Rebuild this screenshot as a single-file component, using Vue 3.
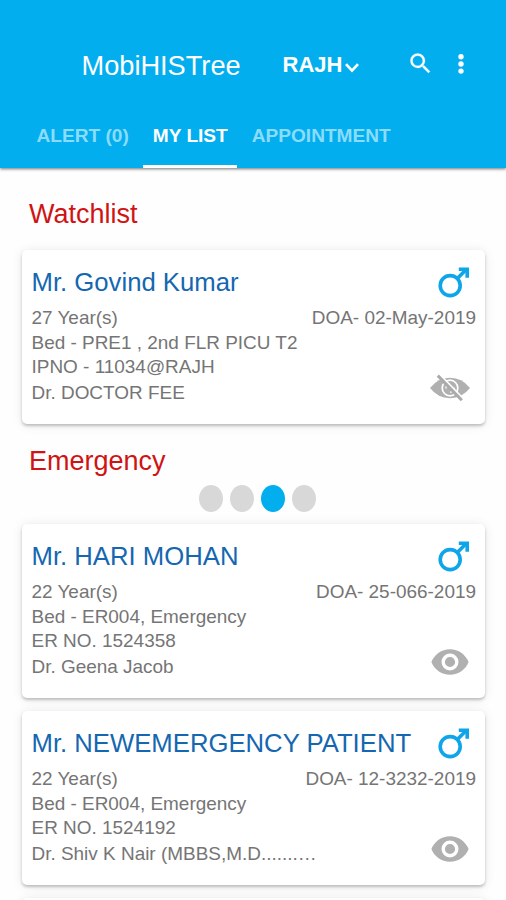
<script setup>
const tabs = [
  { label: 'ALERT (0)', active: false },
  { label: 'MY LIST', active: true },
  { label: 'APPOINTMENT', active: false },
]

const sections = [
  {
    title: 'Watchlist',
    dots: 0,
    patients: [
      {
        name: 'Mr. Govind Kumar',
        age: '27 Year(s)',
        doa: 'DOA- 02-May-2019',
        lines: ['Bed - PRE1 , 2nd FLR PICU T2', 'IPNO - 11034@RAJH', 'Dr. DOCTOR FEE'],
        watched: true,
      },
    ],
  },
  {
    title: 'Emergency',
    dots: 4,
    patients: [
      {
        name: 'Mr. HARI MOHAN',
        age: '22 Year(s)',
        doa: 'DOA- 25-066-2019',
        lines: ['Bed - ER004, Emergency', 'ER NO. 1524358', 'Dr. Geena Jacob'],
        watched: false,
      },
      {
        name: 'Mr. NEWEMERGENCY PATIENT',
        age: '22 Year(s)',
        doa: 'DOA- 12-3232-2019',
        lines: ['Bed - ER004, Emergency', 'ER NO. 1524192', 'Dr. Shiv K Nair (MBBS,M.D.......…'],
        watched: false,
      },
    ],
  },
]
</script>

<template>
  <div class="screen">
    <header class="appbar">
      <div class="toolbar">
        <h1 class="title">MobiHISTree</h1>
        <div class="site">
          <span>RAJH</span>
          <svg class="chevron" viewBox="0 0 16 12"><path d="M2 2.2 8 8.6 14 2.2" fill="none" stroke="#fff" stroke-width="2.7" /></svg>
        </div>
        <svg class="search" viewBox="0 0 24 24"><path fill="#fff" stroke="#fff" stroke-width="0.2" d="M15.5 14h-.79l-.28-.27A6.47 6.47 0 0 0 16 9.5 6.5 6.5 0 1 0 9.5 16c1.61 0 3.09-.59 4.23-1.57l.27.28v.79l5 4.99L20.49 19l-4.99-5zm-6 0C7.01 14 5 11.99 5 9.5S7.01 5 9.5 5 14 7.01 14 9.5 11.99 14 9.5 14z" /></svg>
        <svg class="more" viewBox="0 0 6 20"><g fill="#fff"><circle cx="3" cy="2.8" r="2.7" /><circle cx="3" cy="10" r="2.7" /><circle cx="3" cy="17.1" r="2.7" /></g></svg>
      </div>
      <nav class="tabs">
        <span v-for="t in tabs" :key="t.label" class="tab" :class="{ active: t.active }">{{ t.label }}</span>
      </nav>
    </header>

    <main class="content">
      <section v-for="s in sections" :key="s.title" class="section">
        <h2 class="heading">{{ s.title }}</h2>
        <div v-if="s.dots" class="dots">
          <i v-for="n in s.dots" :key="n" class="dot" :class="{ on: n === 3 }"></i>
        </div>
        <article v-for="p in s.patients" :key="p.name" class="card">
          <div class="head">
            <h3 class="name">{{ p.name }}</h3>
            <svg class="gender" viewBox="0 0 32 31">
              <g fill="none" stroke="#0fa5e9" stroke-width="3.6">
                <circle cx="12.2" cy="18.6" r="10" />
                <path d="M19.3 11.5 28.5 2.3" />
                <path d="M20.8 2.3H29.2V10.7" />
              </g>
            </svg>
          </div>
          <div class="row">
            <span>{{ p.age }}</span>
            <span>{{ p.doa }}</span>
          </div>
          <div class="bottom">
            <div class="lines">
              <p v-for="l in p.lines" :key="l">{{ l }}</p>
            </div>
            <svg v-if="p.watched" class="eye" viewBox="0 0 40 28">
              <path d="M0 14Q8 3.8 20 3.8T40 14Q32 24.2 20 24.2T0 14Z" fill="#b0b0b0" />
              <circle cx="20" cy="14" r="7.8" fill="none" stroke="#fff" stroke-width="1.7" />
              <path d="M16 14.5a4.2 4.2 0 0 1 4-4.7M24 13.5a4.2 4.2 0 0 1-4 4.7" fill="none" stroke="#fff" stroke-width="1.3" />
              <path d="M9.8 0.6 33.8 25.2" stroke="#fff" stroke-width="1.8" />
              <path d="M7.8 1.6 31.8 26.2" stroke="#aaa" stroke-width="3" />
            </svg>
            <svg v-else class="eye" viewBox="0 0 40 28">
              <path fill-rule="evenodd" fill="#b0b0b0" d="M20 1.2C11.5 1.2 4.3 6.5 1.4 14 4.3 21.5 11.5 26.8 20 26.8S35.7 21.5 38.6 14C35.7 6.5 28.5 1.2 20 1.2ZM20 22.5A8.5 8.5 0 1 1 20 5.5 8.5 8.5 0 0 1 20 22.5ZM20 8.9A5.1 5.1 0 1 0 20 19.1 5.1 5.1 0 0 0 20 8.9Z" />
            </svg>
          </div>
        </article>
      </section>
      <div class="card next"></div>
    </main>
  </div>
</template>

<style>
body {
  margin: 0;
  background: #fefefe;
  overflow: hidden;
}
</style>

<style scoped>
.screen {
  height: 900px;
  overflow: hidden;
  font-family: "Liberation Sans", Arial, sans-serif;
}
h1, h2, h3, p { margin: 0; font-weight: 400; }
svg { display: block; flex: none; }
.appbar {
  position: relative;
  box-sizing: border-box;
  height: 168px;
  padding-top: 46px;
  background: #03aeef;
  color: #fff;
  box-shadow: 0 1px 3px rgba(0, 0, 0, 0.55);
}
.toolbar {
  display: flex;
  align-items: center;
  height: 38px;
  padding-left: 81.5px;
}
.title {
  width: 201px;
  font-size: 27.2px;
  line-height: 38px;
  padding-top: 1px;
}
.site {
  display: flex;
  align-items: center;
  width: 124px;
  font-size: 22px;
  line-height: 38px;
  font-weight: 700;
}
.chevron { width: 16px; height: 12px; margin: 5px 0 0 2px; }
.search { width: 27px; height: 27px; margin: -3px 25px 0 0; }
.more { width: 6px; height: 20px; margin-top: -3px; margin-left: -1px; }
.tabs {
  display: flex;
  height: 84px;
  padding-left: 27px;
}
.tab {
  box-sizing: border-box;
  height: 84px;
  padding: 42px 9.5px 0;
  margin-right: 5px;
  font-size: 19.1px;
  line-height: 20px;
  font-weight: 700;
  color: #8bdcfb;
}
.tab.active { color: #fff; border-bottom: 3px solid #fff; }
.content { padding: 0 21px 0 22px; }
.heading {
  height: 82px;
  box-sizing: border-box;
  padding: 30px 0 0 7px;
  font-size: 27px;
  line-height: 32px;
  color: #d01313;
}
.section + .section .heading { height: 48px; padding-top: 8px; }
.dots {
  display: flex;
  justify-content: center;
  gap: 7px;
  height: 39px;
  padding-left: 8px;
}
.dot { width: 24px; height: 27px; border-radius: 50%; background: #d8d8d8; }
.dot.on { background: #03aeef; }
.card {
  box-sizing: border-box;
  height: 174px;
  margin-bottom: 13px;
  padding: 17px 9px 0 9.5px;
  border-radius: 5px;
  background: #fff;
  box-shadow: 0 2px 3px rgba(0, 0, 0, 0.22), 0 1px 12px rgba(0, 0, 0, 0.09);
}
.card + .card { margin-top: -0.5px; }
.next { height: 60px; }
.head { display: flex; justify-content: space-between; height: 39px; }
.name { font-size: 25.7px; line-height: 30px; color: #1467b0; white-space: nowrap; }
.gender { width: 32px; height: 31px; margin-right: 6px; }
.row, .lines { font-size: 18.95px; line-height: 24px; color: #757575; white-space: nowrap; }
.row { display: flex; justify-content: space-between; margin-bottom: 1px; }
.bottom { display: flex; justify-content: space-between; }
.lines p:last-child { margin-top: 2px; }
.eye { width: 40px; height: 28px; margin: 43px 6px 0 0; }
</style>
